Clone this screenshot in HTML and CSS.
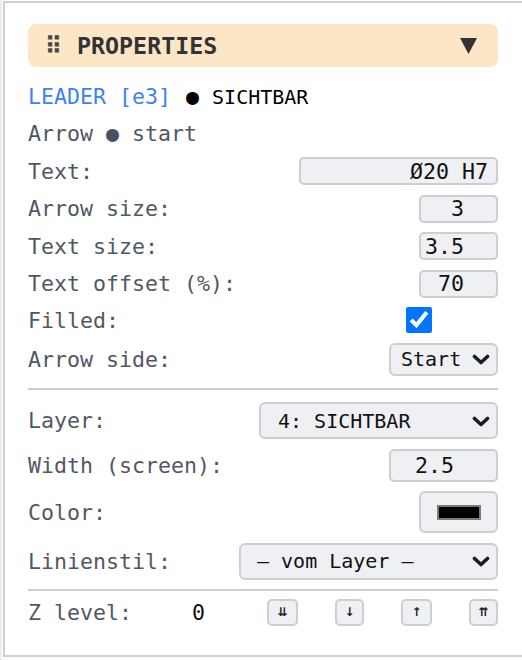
FILE: index.html
```html
<!DOCTYPE html>
<html lang="de">
<head>
<meta charset="utf-8">
<title>Properties</title>
<link rel="stylesheet" href="styles.css">
</head>
<body>
<section class="panel">
  <header class="panel-head">
    <div class="head-left">
      <span class="grip">⠿</span>
      <span class="title">PROPERTIES</span>
    </div>
    <svg class="caret" width="17" height="16" viewBox="0 0 17 16" aria-hidden="true"><polygon points="0,0 17,0 8.5,16" fill="#333"/></svg>
  </header>

  <div class="props">
    <div class="row"><span class="line"><span class="entity">LEADER [e3]</span> <span class="dot-black">●</span> <span class="layer-name">SICHTBAR</span></span></div>
    <div class="row"><span class="line label">Arrow <span class="dot">●</span> start</span></div>

    <div class="row"><span class="label">Text:</span><input class="field field-text" type="text" value="Ø20 H7"></div>
    <div class="row"><span class="label">Arrow size:</span><input class="field field-num" type="text" value="3"></div>
    <div class="row"><span class="label">Text size:</span><input class="field field-num" type="text" value="3.5"></div>
    <div class="row"><span class="label">Text offset (%):</span><input class="field field-num" type="text" value="70"></div>
    <div class="row row-check"><span class="label">Filled:</span><input class="check" type="checkbox" checked></div>
    <div class="row row-select-sm"><span class="label">Arrow side:</span>
      <div class="select-wrap">
        <select class="select select-sm"><option>Start</option></select>
        <svg class="chev" width="18" height="11" viewBox="0 0 18 11" aria-hidden="true"><path d="M2.5 2.5 L9 8.5 L15.5 2.5" fill="none" stroke="#1e1e1e" stroke-width="3.6" stroke-linecap="round" stroke-linejoin="round"/></svg>
      </div>
    </div>

    <hr class="sep sep-a">

    <div class="row row-select-lg"><span class="label">Layer:</span>
      <div class="select-wrap">
        <select class="select select-layer"><option>4: SICHTBAR</option></select>
        <svg class="chev" width="18" height="11" viewBox="0 0 18 11" aria-hidden="true"><path d="M2.5 2.5 L9 8.5 L15.5 2.5" fill="none" stroke="#1e1e1e" stroke-width="3.6" stroke-linecap="round" stroke-linejoin="round"/></svg>
      </div>
    </div>
    <div class="row row-width"><span class="label">Width (screen):</span><input class="field field-width" type="text" value="2.5"></div>
    <div class="row row-color"><span class="label">Color:</span><button class="color-btn" type="button"><span class="swatch"></span></button></div>
    <div class="row row-select-lg"><span class="label">Linienstil:</span>
      <div class="select-wrap">
        <select class="select select-style"><option>— vom Layer —</option></select>
        <svg class="chev" width="18" height="11" viewBox="0 0 18 11" aria-hidden="true"><path d="M2.5 2.5 L9 8.5 L15.5 2.5" fill="none" stroke="#1e1e1e" stroke-width="3.6" stroke-linecap="round" stroke-linejoin="round"/></svg>
      </div>
    </div>

    <hr class="sep sep-b">

    <div class="row row-z">
      <span class="label z-label">Z level:</span>
      <span class="z-val">0</span>
      <div class="z-btns">
        <button class="zbtn zbtn-wide" type="button">⇊</button>
        <button class="zbtn" type="button">↓</button>
        <button class="zbtn zbtn-wide" type="button">↑</button>
        <button class="zbtn" type="button">⇈</button>
      </div>
    </div>
  </div>
</section>
</body>
</html>
```

FILE: styles.css
```css
html, body {
  margin: 0;
}

html {
  background: linear-gradient(to right, #eceef1 0, #eceef1 2px, #ffffff 2px);
}

body {
  font-family: "DejaVu Sans Mono", "Liberation Mono", monospace;
  font-size: 21.6px;
  color: #111;
}

.panel {
  margin: 1px 0 0 3px;
  border: 2px solid #cdd0d5;
  border-right: 0;
  padding: 21px 24px 29px 23px;
  background: #ffffff;
}

.panel-head {
  height: 43px;
  box-sizing: border-box;
  background: #fde6c6;
  border-radius: 8px;
  display: flex;
  align-items: center;
  justify-content: space-between;
  padding: 0 21px 0 17px;
  color: #333;
  font-weight: bold;
  font-size: 23.3px;
}

.head-left {
  display: flex;
  align-items: center;
  gap: 15px;
}

.grip {
  color: #4a4a4a;
}

.caret {
  display: block;
}

.props {
  margin-top: 15px;
  display: flex;
  flex-direction: column;
}

.row {
  display: flex;
  align-items: center;
  justify-content: space-between;
  min-height: 28px;
}

.row + .row {
  margin-top: 9.5px;
}

.line {
  white-space: pre;
}

.entity {
  color: #3b82f6;
}

.dot-black {
  color: #000;
  margin-left: 2px;
}

.layer-name {
  color: #000;
  font-size: 20px;
}

.label {
  color: #525863;
}

.dot {
  color: #4b5060;
}

.field {
  box-sizing: border-box;
  height: 28px;
  border: 2px solid #cbced3;
  border-radius: 5px;
  background: #eff0f3;
  font: inherit;
  color: #111;
  text-align: right;
  margin: 0;
  outline: none;
}

.field-text {
  width: 199px;
  padding: 0 8px;
}

.field-num {
  width: 79px;
  padding: 0 32px 0 4px;
}

.row-check {
  min-height: 26px;
}

.check {
  width: 26px;
  height: 26px;
  margin: 0 66px 0 0;
  accent-color: #0075ff;
}

.select-wrap {
  position: relative;
  display: flex;
}

.select {
  appearance: none;
  -webkit-appearance: none;
  box-sizing: border-box;
  border: 2px solid #cbced3;
  border-radius: 6px;
  background: #eff0f3;
  font: inherit;
  font-size: 20px;
  color: #111;
  margin: 0;
  outline: none;
}

.select-sm {
  width: 109px;
  height: 33px;
  padding: 0 30px 0 10px;
}

.select-layer {
  width: 239px;
  height: 37px;
  padding: 0 30px 0 17px;
}

.select-style {
  width: 259px;
  height: 37px;
  padding: 0 30px 0 16px;
}

.chev {
  position: absolute;
  right: 8px;
  top: 50%;
  margin-top: -5px;
  pointer-events: none;
}

.sep {
  border: 0;
  border-top: 2px solid #cbced3;
  height: 0;
  width: 100%;
  box-sizing: border-box;
}

.sep-a {
  margin: 12.5px 0 12px;
}

.sep-b {
  margin: 9px 0 7.5px;
}

.field-width {
  width: 109px;
  height: 33px;
  padding: 0 42px 0 4px;
}

.color-btn {
  box-sizing: border-box;
  width: 79px;
  height: 42px;
  border: 2px solid #cbced3;
  border-radius: 6px;
  background: #eff0f3;
  margin: 0;
  padding: 0;
  display: flex;
  align-items: center;
  justify-content: center;
}

.swatch {
  display: block;
  box-sizing: border-box;
  width: 44px;
  height: 15px;
  background: #000;
  border: 2px solid #7a7a7a;
}

.row-z {
  justify-content: flex-start;
}

.z-label {
  width: 164px;
}

.z-val {
  color: #111;
}

.z-btns {
  margin-left: auto;
  display: flex;
  gap: 37px;
}

.zbtn {
  box-sizing: border-box;
  width: 29px;
  height: 27px;
  border: 2px solid #cbced3;
  border-radius: 5px;
  background: #eff0f3;
  margin: 0;
  padding: 0;
  font-family: "DejaVu Sans", sans-serif;
  font-size: 12px;
  font-weight: bold;
  color: #222;
  display: flex;
  align-items: center;
  justify-content: center;
}

.zbtn-wide {
  width: 31px;
}
```
